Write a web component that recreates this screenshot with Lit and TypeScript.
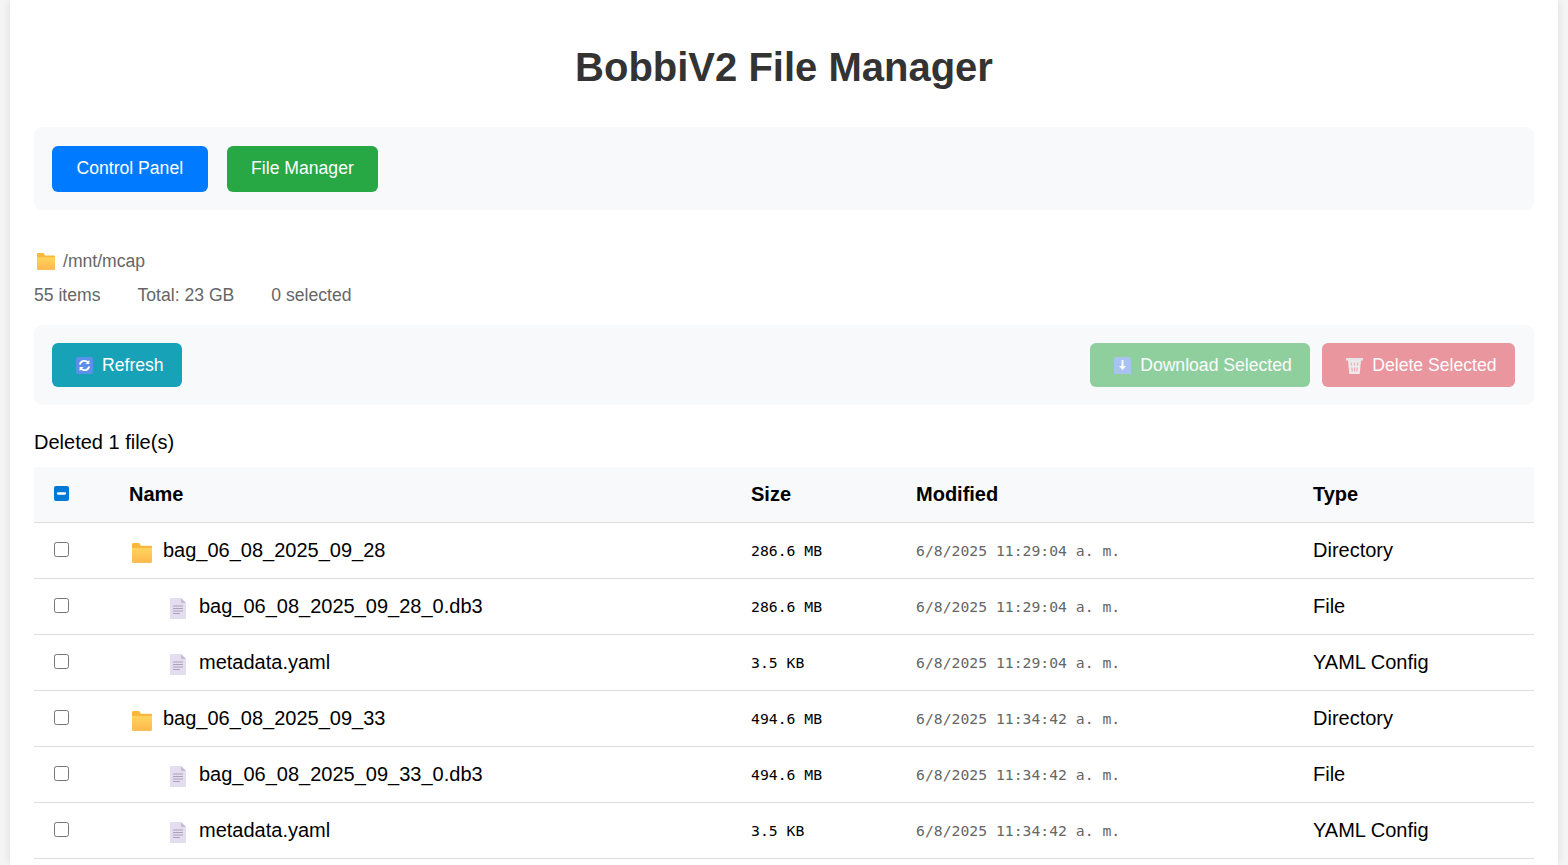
import { LitElement, html, css, svg } from "lit";
import { customElement } from "lit/decorators.js";

const folderIcon = (w: number, h: number) => html`
  <svg class="ico" width=${w} height=${h} viewBox="0 2 20 17" preserveAspectRatio="none">
    <defs>
      <linearGradient id="fg" x1="0" y1="0" x2="0" y2="1">
        <stop offset="0" stop-color="#ffd45e" />
        <stop offset="1" stop-color="#ffb84d" />
      </linearGradient>
    </defs>
    <path d="M0 3.500C0 2.700.6 2 1.400 2h5.200c.6 0 1 .3 1.300.8L8.800 4.400H19c.6 0 1 .4 1 1v12c0 .8-.6 1.400-1.400 1.400H1.400C.6 18.800 0 18.200 0 17.400z" fill="#f9b73e" />
    <path d="M0 6.200h20v11.200c0 .8-.6 1.400-1.400 1.400H1.400C.6 18.800 0 18.200 0 17.400z" fill="url(#fg)" />
  </svg>
`;

const fileIcon = svg`
  <path d="M0 0h11l5 5v16H0z" fill="#e4dcef" />
  <path d="M11 0l5 5h-5z" fill="#c5bdd0" />
  <path d="M3 8h10M3 10.500h10M3 13h10M3 15.500h7" stroke="#a9a1b8" stroke-width="1" fill="none" />
`;

const refreshIcon = html`
  <svg class="ico" width="17" height="17" viewBox="0 0 17 17">
    <rect width="17" height="17" rx="2" fill="#5c8fe8" />
    <path d="M3.800 7.500a4.800 4.800 0 0 1 8.300-2" stroke="#fff" stroke-width="1.800" fill="none" />
    <path d="M13.400 3v4h-4z" fill="#fff" />
    <path d="M13.200 9.500a4.800 4.800 0 0 1-8.300 2" stroke="#fff" stroke-width="1.800" fill="none" />
    <path d="M3.600 14v-4h4z" fill="#fff" />
  </svg>
`;

const downloadIcon = html`
  <svg class="ico" width="17" height="17" viewBox="0 0 17 17">
    <rect width="17" height="17" rx="1.500" fill="#5c8fe8" />
    <path d="M7.500 3h2v6h2.500l-3.500 4-3.500-4h2.500z" fill="#fff" />
  </svg>
`;

const trashIcon = html`
  <svg class="ico" width="17" height="17" viewBox="0 0 17 17">
    <path d="M2 3h13l-1.300 14H3.300z" fill="#e4dde0" />
    <path d="M0 1h17v2.500H0z" fill="#d8d2d6" />
    <path d="M5 5.500l.6 3M8.500 5.500v3M12 5.500l-.6 3M5.800 10.500l.5 4M8.500 10.500v4M11.200 10.500l-.5 4" stroke="#dc3545" stroke-width="1.200" opacity="0.7" fill="none" />
  </svg>
`;

interface Row {
  name: string;
  dir: boolean;
  size: string;
  modified: string;
  type: string;
}

const rows: Row[] = [
  { name: "bag_06_08_2025_09_28", dir: true, size: "286.6 MB", modified: "6/8/2025 11:29:04 a. m.", type: "Directory" },
  { name: "bag_06_08_2025_09_28_0.db3", dir: false, size: "286.6 MB", modified: "6/8/2025 11:29:04 a. m.", type: "File" },
  { name: "metadata.yaml", dir: false, size: "3.5 KB", modified: "6/8/2025 11:29:04 a. m.", type: "YAML Config" },
  { name: "bag_06_08_2025_09_33", dir: true, size: "494.6 MB", modified: "6/8/2025 11:34:42 a. m.", type: "Directory" },
  { name: "bag_06_08_2025_09_33_0.db3", dir: false, size: "494.6 MB", modified: "6/8/2025 11:34:42 a. m.", type: "File" },
  { name: "metadata.yaml", dir: false, size: "3.5 KB", modified: "6/8/2025 11:34:42 a. m.", type: "YAML Config" },
];

@customElement("app-root")
export class AppRoot extends LitElement {
  firstUpdated() {
    const all = this.renderRoot.querySelector<HTMLInputElement>("#all");
    if (all) all.indeterminate = true;
  }

  render() {
    return html`
      <main class="page">
        <h1>BobbiV2 File Manager</h1>
        <nav class="panel nav">
          <button class="btn blue">Control Panel</button>
          <button class="btn green">File Manager</button>
        </nav>
        <div class="path">${folderIcon(18, 17)}<span>/mnt/mcap</span></div>
        <div class="stats">
          <span>55 items</span>
          <span>Total: 23 GB</span>
          <span>0 selected</span>
        </div>
        <section class="panel toolbar">
          <button class="btn small teal">${refreshIcon}Refresh</button>
          <div class="right">
            <button class="btn small green off">${downloadIcon}Download Selected</button>
            <button class="btn small red off">${trashIcon}Delete Selected</button>
          </div>
        </section>
        <p class="status">Deleted 1 file(s)</p>
        <table>
          <colgroup>
            <col class="c1" /><col class="c2" /><col class="c3" /><col class="c4" /><col />
          </colgroup>
          <thead>
            <tr>
              <th><input id="all" type="checkbox" /></th>
              <th>Name</th>
              <th>Size</th>
              <th>Modified</th>
              <th>Type</th>
            </tr>
          </thead>
          <tbody>
            ${rows.map(
              (r) => html`
                <tr>
                  <td><input type="checkbox" /></td>
                  <td>
                    <div class="name ${r.dir ? "dir" : "file"}">
                      ${r.dir
                        ? folderIcon(20, 20)
                        : html`<svg class="ico" width="16" height="21" viewBox="0 0 16 21">${fileIcon}</svg>`}
                      <span>${r.name}</span>
                    </div>
                  </td>
                  <td class="size">${r.size}</td>
                  <td class="date">${r.modified}</td>
                  <td>${r.type}</td>
                </tr>
              `
            )}
          </tbody>
        </table>
      </main>
    `;
  }

  static styles = css`
    :host {
      display: block;
      height: 865px;
      overflow: hidden;
      background: #f5f5f5;
      font-family: "Liberation Sans", Arial, sans-serif;
    }
    .page {
      margin: 0 10px;
      padding: 2px 24px 0;
      min-height: 863px;
      background: #fff;
      box-shadow: 0 0 10px rgba(0, 0, 0, 0.1);
    }
    h1 {
      margin: 42px 0 37px;
      font-size: 40px;
      line-height: 46px;
      font-weight: 700;
      text-align: center;
      color: #333;
    }
    .panel {
      background: #f8f9fa;
      border-radius: 8px;
      display: flex;
      align-items: center;
    }
    .nav {
      height: 83px;
      padding: 0 18px;
      gap: 19px;
    }
    .btn {
      border: 0;
      border-radius: 6px;
      height: 46px;
      padding: 0 24.500px;
      color: #fff;
      font: 17.6px "Liberation Sans", Arial, sans-serif;
      display: inline-flex;
      align-items: center;
      gap: 9px;
    }
    .btn.small {
      height: 44px;
      padding: 0 18.500px 0 24px;
    }
    .blue { background: #007bff; }
    .green { background: #28a745; }
    .teal { background: #17a2b8; }
    .red { background: #dc3545; }
    .off { opacity: 0.5; }
    .ico { flex: none; display: block; }
    .path {
      margin: 39px 0 0 3px;
      height: 24px;
      display: flex;
      align-items: center;
      gap: 8px;
      font-size: 17.6px;
      color: #666;
    }
    .stats {
      margin-top: 10px;
      height: 24px;
      display: flex;
      align-items: center;
      gap: 37px;
      font-size: 17.6px;
      color: #666;
    }
    .toolbar {
      margin-top: 18px;
      height: 80px;
      padding: 0 19px 0 18px;
      justify-content: space-between;
    }
    .right {
      display: flex;
      gap: 12px;
    }
    .status {
      margin: 25px 0 13px;
      font-size: 20px;
      line-height: 24px;
      color: #000;
    }
    table {
      width: 100%;
      table-layout: fixed;
      border-collapse: collapse;
      font-size: 20px;
      color: #000;
    }
    .c1 { width: 75px; }
    .c2 { width: 622px; }
    .c3 { width: 165px; }
    .c4 { width: 397px; }
    th, td {
      padding: 0 20px;
      text-align: left;
      border-bottom: 1px solid #ddd;
      height: 55px;
      box-sizing: content-box;
    }
    th {
      background: #f8f9fa;
      font-weight: 700;
    }
    input[type="checkbox"] {
      display: block;
      width: 15px;
      height: 15px;
      margin: 0 0 2px;
      accent-color: #0078d4;
    }
    .name {
      display: flex;
      align-items: center;
    }
    .name.dir { padding-left: 3px; gap: 11px; }
    .name.dir .ico { margin-top: 5px; }
    .name.file { padding-left: 41px; gap: 13px; }
    .name.file .ico { margin-top: 4px; }
    .size, .date {
      font: 14.75px "DejaVu Sans Mono", monospace;
    }
    .date { color: #666; }
  `;
}
